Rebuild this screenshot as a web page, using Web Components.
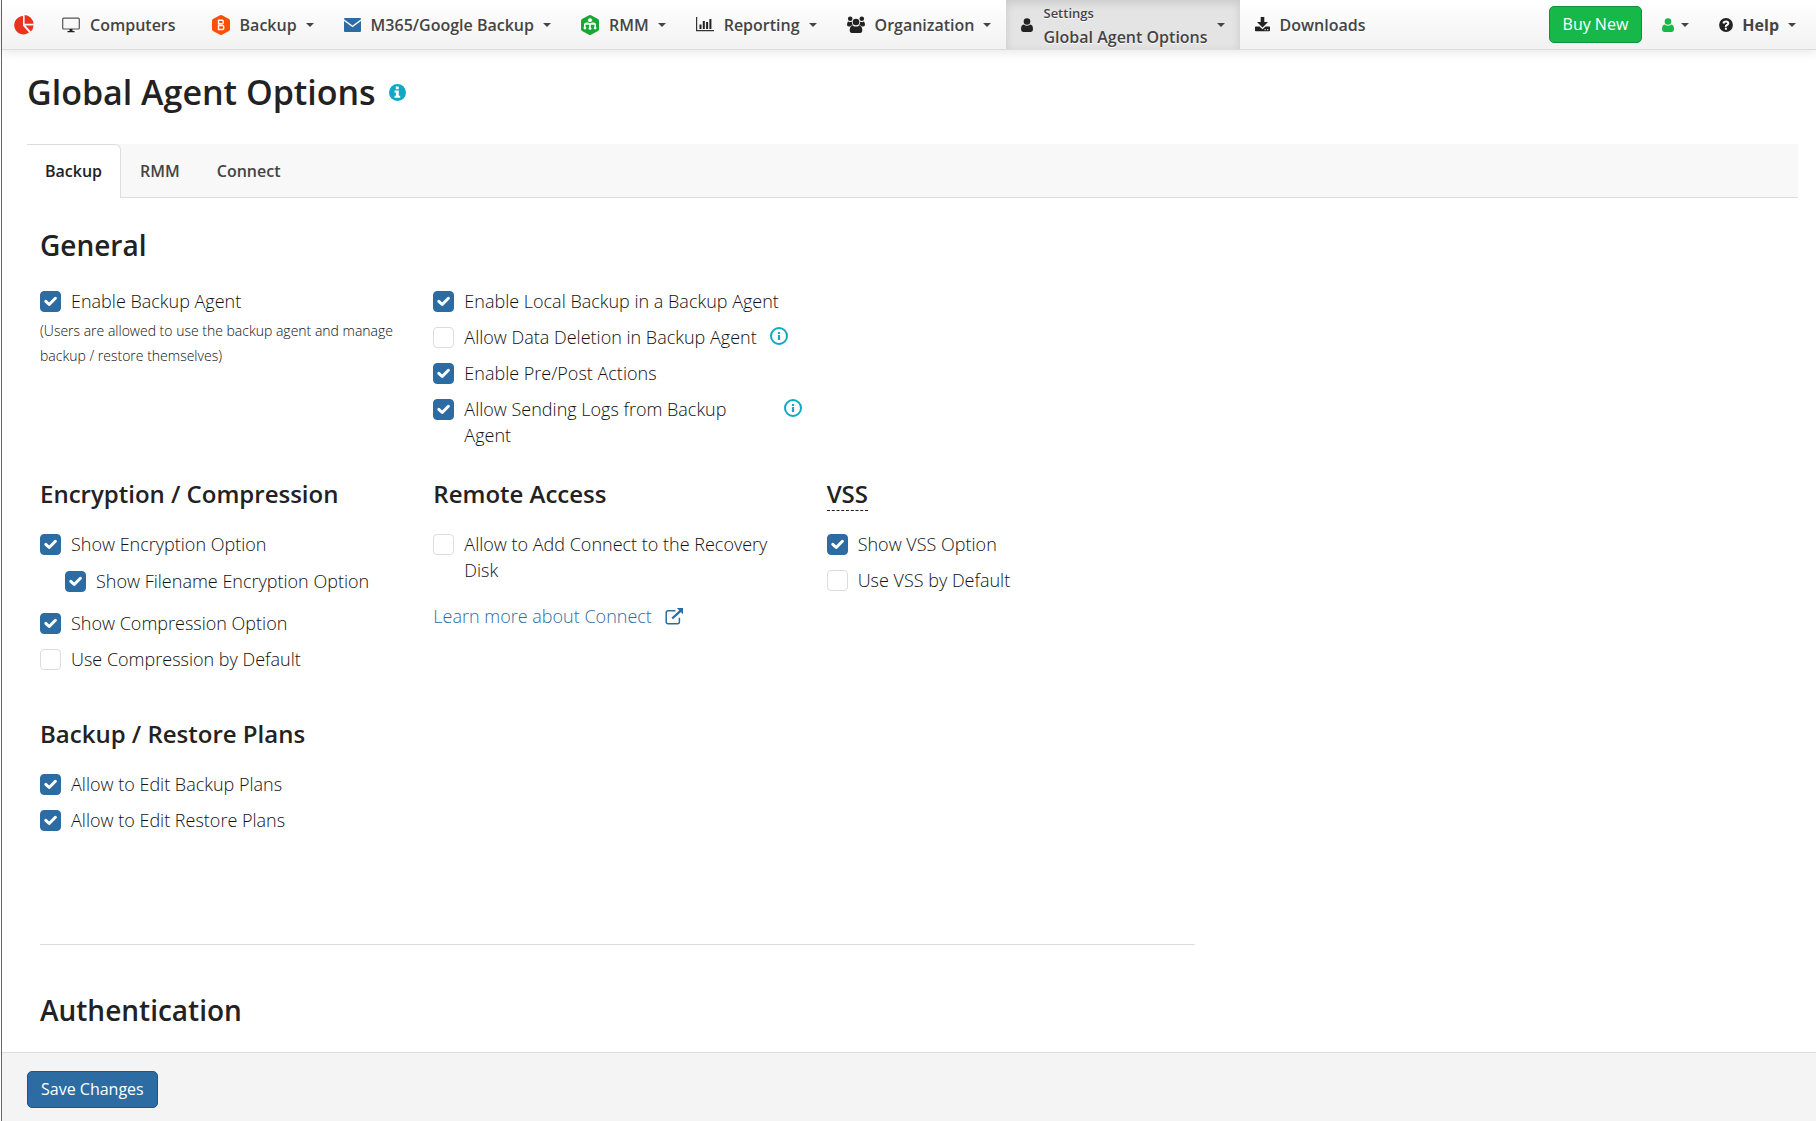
<!DOCTYPE html>
<html lang="en">
<head>
<meta charset="utf-8">
<meta name="viewport" content="width=device-width, initial-scale=1">
<title>Global Agent Options</title>
<style>
  :root {
    --fg: #222;
    --fg-nav: #444;
    --line: #ddd;
    --primary: #2d6ca2;
    --green: #17b84a;
  }
  body {
    margin: 0;
    padding-left: 1px;
    background: #fff;
    color: #111;
    font: 350 18px/26px "Open Sans", "Noto Sans", sans-serif;
  }
</style>
</head>
<body>
<app-shell>
  <top-bar slot="header">
    <nav-item icon="monitor" label="Computers" href="#computers"></nav-item>
    <nav-item icon="backup" label="Backup" menu></nav-item>
    <nav-item icon="mail" label="M365/Google Backup" menu></nav-item>
    <nav-item icon="rmm" label="RMM" menu></nav-item>
    <nav-item icon="chart" label="Reporting" menu></nav-item>
    <nav-item icon="users" label="Organization" menu></nav-item>
    <nav-item icon="user" section="Settings" label="Global Agent Options" menu active></nav-item>
    <nav-item icon="download" label="Downloads" href="#downloads"></nav-item>
    <ui-button slot="end" kind="success">Buy New</ui-button>
    <nav-item slot="end" icon="user" title="Account" menu compact></nav-item>
    <nav-item slot="end" icon="question" label="Help" menu strong></nav-item>
  </top-bar>

  <page-title>Global Agent Options</page-title>
  <tab-strip tabs="Backup,RMM,Connect" selected="Backup"></tab-strip>

  <options-section heading="General">
    <options-grid>
      <option-group>
        <check-option label="Enable Backup Agent" checked></check-option>
        <p slot="note">(Users are allowed to use the backup agent and manage backup / restore themselves)</p>
      </option-group>
      <option-group>
        <check-option label="Enable Local Backup in a Backup Agent" checked></check-option>
        <check-option label="Allow Data Deletion in Backup Agent" info></check-option>
        <check-option label="Enable Pre/Post Actions" checked></check-option>
        <check-option label="Allow Sending Logs from Backup Agent" checked info></check-option>
      </option-group>
    </options-grid>
    <options-grid class="second">
      <option-group heading="Encryption / Compression">
        <check-option label="Show Encryption Option" checked></check-option>
        <check-option label="Show Filename Encryption Option" checked nested></check-option>
        <check-option label="Show Compression Option" checked></check-option>
        <check-option label="Use Compression by Default"></check-option>
      </option-group>
      <option-group heading="Remote Access">
        <check-option label="Allow to Add Connect to the Recovery Disk"></check-option>
        <external-link slot="note" href="#connect">Learn more about Connect</external-link>
      </option-group>
      <option-group heading="VSS" hint>
        <check-option label="Show VSS Option" checked></check-option>
        <check-option label="Use VSS by Default"></check-option>
      </option-group>
    </options-grid>
    <options-grid class="third">
      <option-group heading="Backup / Restore Plans">
        <check-option label="Allow to Edit Backup Plans" checked></check-option>
        <check-option label="Allow to Edit Restore Plans" checked></check-option>
      </option-group>
    </options-grid>
  </options-section>
  <options-section heading="Authentication" divided></options-section>

  <ui-button slot="footer" kind="primary">Save Changes</ui-button>
</app-shell>

<script>
const HEXAGON = 'M8 .3q1-.5 2 0l7 3.700q1 .6 1 1.700v8.600q0 1.100-1 1.700l-7 3.700q-1 .5-2 0l-7-3.700q-1-.6-1-1.700V5.700Q0 4.600 1 4z';

const ICONS = {
  logo: [20, 20, `
    <path fill="#e8341f" d="M9 1v9.700l6 6.800A9.200 9.200 0 1 1 9 1z"/>
    <path fill="#e8341f" d="M10.600 0a9.300 9.300 0 0 1 8.900 8.800h-8.900z"/>
    <path fill="#e8341f" d="M11.400 10.400h8.200a9 9 0 0 1-2.700 6z"/>`],
  monitor: [18, 16, `
    <rect x=".7" y="1.200" width="16.600" height="10.800" rx="1" fill="none" stroke="#555" stroke-width="1.200"/>
    <path fill="#222" d="M7.500 12h3v2h2v1.200h-7V14h2z"/>`],
  backup: [18, 20, `
    <path fill="#fb4f05" d="${HEXAGON}"/>
    <path fill="none" stroke="#fff" stroke-width="1.400" d="M6.500 5.300h3.700q1 0 1 1v1.400q0 1-1 1H6.500zM6.500 10.500h4.200q1 0 1 1v2q0 1-1 1H6.500z"/>`],
  mail: [17, 14, `
    <path fill="#2d6ca2" d="M1 0h15q1 0 1 1.200L8.500 7.500 0 1.200Q0 0 1 0zM0 3l8.500 6.300L17 3v10q0 1-1 1H1q-1 0-1-1z"/>`],
  rmm: [18, 20, `
    <path fill="#18a832" d="${HEXAGON}"/>
    <path fill="#fff" d="M5.500 7.500h7q2.500 0 2.500 2.500v2.300h-1.500V9.800H9.800v3H8.200v-3H4.500v2.500H3V10q0-2.500 2.500-2.500z"/>
    <circle cx="9" cy="5.200" r="2.500" fill="#fff" stroke="#18a832" stroke-width="1"/>
    <g fill="#fff"><circle cx="3.900" cy="13" r="1.400"/><circle cx="9" cy="13.400" r="1.400"/><circle cx="14.100" cy="13" r="1.400"/></g>`],
  chart: [18, 15, `
    <path fill="none" stroke="#333" stroke-width="1.200" d="M.6 0v13.600H18"/>
    <path fill="#222" d="M3.500 7.500h2v4.500h-2zM6.800 4h2v8h-2zM10.100 5h2v7h-2zM13.400 2h2v10h-2z"/>`],
  users: [18, 17, `
    <g fill="#222"><circle cx="3.200" cy="2.800" r="2.300"/><circle cx="14.800" cy="2.800" r="2.300"/><circle cx="9" cy="6" r="3.300"/>
    <path d="M1.500 5.500Q3 6.600 5 5.700 4.800 8 6 9.200 4 9.200 3 10.500H1.800Q0 10.500 0 8.800 0 6 1.500 5.500zM16.500 5.500Q15 6.600 13 5.700q.2 2.300-1 3.500 2 0 3 1.300h1.200q1.800 0 1.800-1.700 0-2.800-1.500-3.300zM5.700 9.400Q9 11.800 12.300 9.400q3 .4 3 4.900 0 2.700-2.300 2.700H5q-2.300 0-2.300-2.700 0-4.500 3-4.900z"/></g>`],
  user: [12, 14, `
    <g fill="currentColor"><circle cx="6" cy="3.500" r="3.300"/>
    <path d="M2.800 6.400Q6 8.900 9.200 6.400 12 6.700 12 11.200q0 2.500-2.200 2.800H2.200Q0 13.700 0 11.200 0 6.700 2.800 6.400z"/></g>`],
  download: [15, 15, `
    <path fill="#222" d="M5.700 0h3.600v5H13L7.500 10.500 2 5h3.700z"/>
    <path fill="#222" fill-rule="evenodd" d="M.8 9.500h3.700L7.500 12.300l3-2.800h3.700q.8 0 .8.800v3q0 .9-.8.900H.8q-.8 0-.8-.9v-3q0-.8.800-.8zM9.500 12.200h1.300v1H9.500zm2.500 0h1.300v1H12z"/>`],
  question: [14, 14, `
    <circle cx="7" cy="7" r="6.900" fill="#222"/>
    <path fill="none" stroke="#fff" stroke-width="2" d="M4.500 5.500Q4.800 3.500 7 3.500t2.300 1.800Q9.300 6.400 8 7t-1.200 1.800"/>
    <path fill="#fff" d="M5.900 9.700h2v2h-2z"/>`],
  infoSolid: [17, 17, `
    <circle cx="8.500" cy="8.500" r="8.500" fill="#10a9c4"/>
    <path fill="#fff" d="M6.800 2.600h3v2.600h-3zM5.500 6.500h4.300v5.300h1.400v1.900H5.500v-1.900h1.400V8.400H5.500z"/>`],
  info: [18, 18, `
    <circle cx="9" cy="9" r="8" fill="none" stroke="#10a9c4" stroke-width="2"/>
    <path fill="#10a9c4" d="M7.900 4.900h2.200v2H7.900zM7.900 8h2.200v5H7.900z"/>`],
  external: [19, 17, `
    <path fill="none" stroke="currentColor" stroke-width="1.500" d="M10.500 2.800H3.200q-2 0-2 2v9q0 2 2 2h9.200q2 0 2-2V9.800"/>
    <path fill="none" stroke="currentColor" stroke-width="2.300" d="M7.200 10.500L15.500 2.800"/>
    <path fill="currentColor" d="M11.800 0H18v6.200z"/>`],
  check: [21, 21, `
    <path fill="none" stroke="#fff" stroke-width="3" stroke-linecap="round" stroke-linejoin="round" d="M5.800 10.300l3.400 3.200 6.200-6.200"/>`],
  caret: [8, 4, `<path fill="#444" d="M0 0h8L4 4z"/>`]
};

class BaseElement extends HTMLElement {
  constructor() {
    super();
    this.attachShadow({ mode: 'open' });
  }

  connectedCallback() {
    this.shadowRoot.innerHTML = this.template();
  }

  attr(name) {
    return this.getAttribute(name) || '';
  }
}

class UiIcon extends BaseElement {
  template() {
    const [w, h, body] = ICONS[this.attr('name')];
    return `
      <style>
        :host { display: inline-flex; flex: none; }
        svg { display: block; }
      </style>
      <svg width="${w}" height="${h}" viewBox="0 0 ${w} ${h}" aria-hidden="true">${body}</svg>
    `;
  }
}

class AppShell extends BaseElement {
  template() {
    return `
      <style>
        :host {
          display: flex;
          flex-direction: column;
          box-sizing: border-box;
          height: 100vh;
          border-left: 1px solid #666;
        }
        main {
          flex: 1;
          min-height: 0;
          overflow-y: auto;
          padding: 17px 18px 0 25px;
        }
        footer {
          padding: 18px 25px 13px;
          border-top: 1px solid var(--line);
          background: #f4f4f4;
        }
      </style>
      <slot name="header"></slot>
      <main><slot></slot></main>
      <footer><slot name="footer"></slot></footer>
    `;
  }
}

class TopBar extends BaseElement {
  template() {
    return `
      <style>
        :host {
          position: relative;
          z-index: 1;
          display: block;
          border-bottom: 1px solid var(--line);
          background: linear-gradient(#fff, #f2f2f2);
          box-shadow: 0 2px 10px rgba(0, 0, 0, .1);
        }
        header, nav, .end {
          display: flex;
          align-items: stretch;
        }
        header { height: 49px; }
        nav { flex: 1; }
        .end { align-items: center; padding-right: 5px; }
        .logo {
          display: flex;
          align-items: center;
          padding: 0 13px 0 12px;
        }
      </style>
      <header>
        <a class="logo" href="#home" aria-label="Home"><ui-icon name="logo"></ui-icon></a>
        <nav><slot></slot></nav>
        <div class="end"><slot name="end"></slot></div>
      </header>
    `;
  }
}

class NavItem extends BaseElement {
  template() {
    const menu = this.hasAttribute('menu');
    const tag = menu ? 'button type="button" aria-haspopup="true"' : `a href="${this.attr('href')}"`;
    const name = this.attr('title') ? ` aria-label="${this.attr('title')}"` : '';
    return `
      <style>
        :host { display: flex; }
        button, a {
          display: flex;
          align-items: center;
          margin: 0;
          padding: 0 15px;
          border: 0;
          background: none;
          color: var(--fg-nav);
          font: 600 16px/24px "Open Sans", "Noto Sans", sans-serif;
          text-align: left;
          text-decoration: none;
          text-shadow: 0 1px 0 #fff;
          white-space: nowrap;
          cursor: pointer;
        }
        a { padding-right: 21px; }
        ui-icon { color: #222; }
        .text { margin: 0 9px; }
        nav-item, a .text { margin-right: 0; }
        :host(:not([slot])) .text { margin-left: 10px; }
        small { display: block; font-size: 13px; }
        :host([active]) button {
          background: #e4e4e4;
          box-shadow: inset 0 3px 8px rgba(0, 0, 0, .125);
        }
        :host([active]) .text { line-height: 24px; }
        :host([strong]) button { font-weight: 700; }
        :host([compact]) button { gap: 7px; padding-left: 20px; }
        :host([compact]) ui-icon[name=user] { color: var(--green); }
      </style>
      <${tag}${name}>
        <ui-icon name="${this.attr('icon')}"></ui-icon>
        ${this.attr('label') ? `<span class="text">${this.attr('section') ? `<small>${this.attr('section')}</small>` : ''}${this.attr('label')}</span>` : ''}
        ${menu ? '<ui-icon name="caret"></ui-icon>' : ''}
      </${menu ? 'button' : 'a'}>
    `;
  }
}

class UiButton extends BaseElement {
  template() {
    return `
      <style>
        :host { display: inline-block; vertical-align: top; }
        button {
          display: block;
          padding: 6px 13px;
          border: 1px solid #1f567f;
          border-radius: 5px;
          background: var(--primary);
          color: #fff;
          font: 400 16px/23px "Open Sans", "Noto Sans", sans-serif;
          cursor: pointer;
        }
        :host([kind=success]) button {
          border-color: #12913a;
          background: var(--green);
        }
      </style>
      <button type="button"><slot></slot></button>
    `;
  }
}

class PageTitle extends BaseElement {
  template() {
    return `
      <style>
        :host { display: flex; align-items: center; gap: 13px; color: var(--fg); }
        h1 { margin: 0; font-weight: 600; font-size: 34px; line-height: 50px; }
      </style>
      <h1><slot></slot></h1>
      <ui-icon name="infoSolid"></ui-icon>
    `;
  }
}

class TabStrip extends BaseElement {
  template() {
    const tabs = this.attr('tabs').split(',').map(tab => `
      <button type="button" role="tab" aria-selected="${tab === this.attr('selected')}">${tab}</button>`);
    return `
      <style>
        :host { display: block; margin-top: 27px; }
        div {
          display: flex;
          gap: 1px;
          background: #f8f8f8;
          box-shadow: inset 0 -1px 0 var(--line);
        }
        button {
          padding: 14px 18px 15px;
          border: 0;
          border-top: 1px solid transparent;
          background: none;
          color: var(--fg-nav);
          font: 600 16px/24px "Open Sans", "Noto Sans", sans-serif;
          cursor: pointer;
        }
        button[aria-selected=true] {
          border-top-color: var(--line);
          border-right: 1px solid var(--line);
          border-top-right-radius: 6px;
          background: #fff;
          color: var(--fg);
        }
      </style>
      <div role="tablist">${tabs.join('')}</div>
    `;
  }

  connectedCallback() {
    super.connectedCallback();
    const buttons = this.shadowRoot.querySelectorAll('button');
    buttons.forEach(button => button.addEventListener('click', () => {
      buttons.forEach(b => b.setAttribute('aria-selected', b === button));
    }));
  }
}

class OptionsSection extends BaseElement {
  template() {
    return `
      <style>
        :host { display: block; max-width: 1155px; padding: 29px 0 0 13px; }
        :host([divided]) { padding-top: 111px; }
        :host([divided]) section { border-top: 1px solid var(--line); padding-top: 47px; }
        h2 { margin: 0 0 25px; color: var(--fg); font-weight: 600; font-size: 28px; line-height: 36px; }
        :host([divided]) h2 { margin: 0; }
        ::slotted(.second) { margin-top: 30px; }
        ::slotted(.third) { margin-top: 46px; }
      </style>
      <section>
        <h2>${this.attr('heading')}</h2>
        <slot></slot>
      </section>
    `;
  }
}

class OptionsGrid extends BaseElement {
  template() {
    return `
      <style>
        :host {
          display: grid;
          grid-template-columns: repeat(3, minmax(0, 1fr));
          gap: 25px;
        }
      </style>
      <slot></slot>
    `;
  }
}

class OptionGroup extends BaseElement {
  template() {
    const heading = this.attr('heading');
    return `
      <style>
        :host { display: block; }
        h3 { margin: 0 0 21px; color: var(--fg); font-weight: 600; font-size: 24px; line-height: 32px; }
        :host([hint]) h3 span { border-bottom: 1px dashed var(--fg); cursor: help; }
        .list { display: flex; flex-direction: column; gap: 10px; }
        ::slotted(p) { margin: 4px 0 0; font-size: 14px; line-height: 25px; }
        ::slotted(external-link) { margin-top: 20px; }
      </style>
      ${heading ? `<h3><span>${heading}</span></h3>` : ''}
      <div class="list"><slot></slot></div>
      <slot name="note"></slot>
    `;
  }
}

class CheckOption extends BaseElement {
  template() {
    return `
      <style>
        :host { display: flex; gap: 13px; }
        :host([nested]) { margin: 1px 0 6px 25px; }
        label { display: flex; gap: 10px; cursor: pointer; }
        .box { display: grid; flex: none; align-self: flex-start; margin-top: 3px; }
        .box > * { grid-area: 1 / 1; }
        input {
          appearance: none;
          width: 21px;
          height: 21px;
          margin: 0;
          border: 1px solid var(--line);
          border-radius: 4px;
          background: #fff;
        }
        input:checked { border-color: var(--primary); background: var(--primary); }
        input:not(:checked) + ui-icon { visibility: hidden; }
        .box ui-icon { pointer-events: none; }
        .info { margin-top: 3px; }
      </style>
      <label>
        <span class="box">
          <input type="checkbox" ${this.hasAttribute('checked') ? 'checked' : ''}>
          <ui-icon name="check"></ui-icon>
        </span>
        <span>${this.attr('label')}</span>
      </label>
      ${this.hasAttribute('info') ? '<ui-icon class="info" name="info"></ui-icon>' : ''}
    `;
  }
}

class ExternalLink extends BaseElement {
  template() {
    return `
      <style>
        :host { display: flex; }
        a {
          display: flex;
          align-items: center;
          gap: 13px;
          color: var(--primary);
          text-decoration: none;
        }
        a:hover { text-decoration: underline; }
      </style>
      <a href="${this.attr('href')}"><slot></slot><ui-icon name="external"></ui-icon></a>
    `;
  }
}

customElements.define('ui-icon', UiIcon);
customElements.define('app-shell', AppShell);
customElements.define('top-bar', TopBar);
customElements.define('nav-item', NavItem);
customElements.define('ui-button', UiButton);
customElements.define('page-title', PageTitle);
customElements.define('tab-strip', TabStrip);
customElements.define('options-section', OptionsSection);
customElements.define('options-grid', OptionsGrid);
customElements.define('option-group', OptionGroup);
customElements.define('check-option', CheckOption);
customElements.define('external-link', ExternalLink);
</script>
</body>
</html>
